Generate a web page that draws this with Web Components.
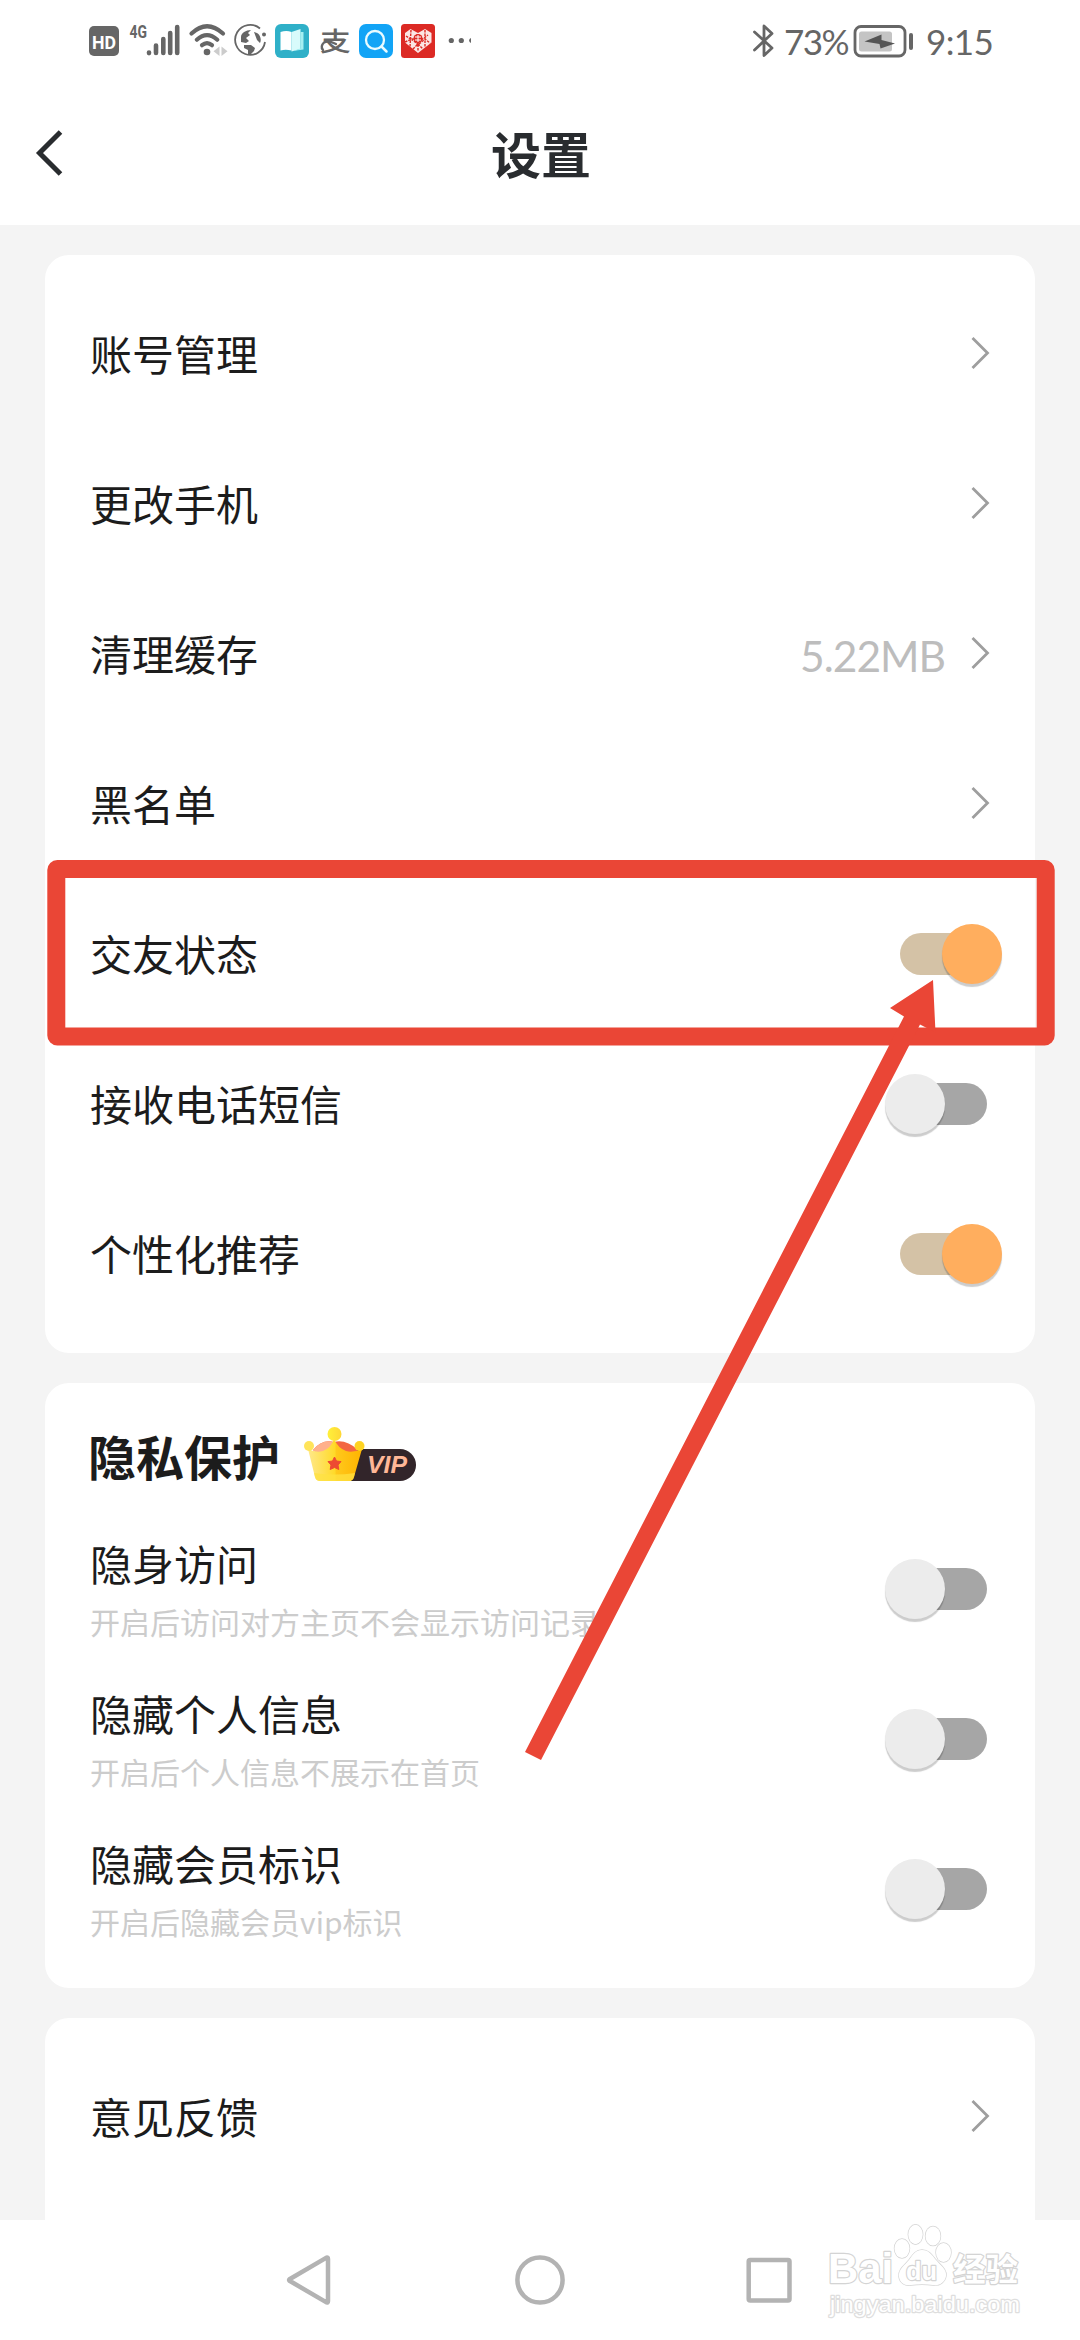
<!DOCTYPE html>
<html lang="zh-CN">
<head>
<meta charset="utf-8">
<title>设置</title>
<style>
html,body{margin:0;padding:0}
body{width:1080px;height:2340px;overflow:hidden;background:#f4f4f4;font-family:"Noto Sans CJK SC",sans-serif;color:#1c1c1c}
</style>
</head>
<body>
<settings-app></settings-app>
<script>
const define=(name,html)=>customElements.define(name,class extends HTMLElement{
  constructor(){
    super();
    const t=document.createElement('template');
    t.innerHTML=html;
    this.attachShadow({mode:'open'}).append(t.content.cloneNode(true));
  }
});

define('status-bar',`
<style>
:host{display:flex;height:80px;box-sizing:border-box;justify-content:space-between;background:#fff;color:#666;padding:0 90px 0 88px}
.r{display:flex;align-items:center;height:82px;font:35px/40px Lato,"Noto Sans",sans-serif}
svg{display:block;flex:none}
.p{margin-left:9px;width:64px;white-space:nowrap;letter-spacing:-1.6px}
.b{margin-left:5px}
.t{margin-left:11px;width:64px;white-space:nowrap;letter-spacing:-.6px}
</style>
<svg width="390" height="80" viewBox="88 0 390 80" fill="none">
  <rect x="89" y="26" width="30" height="30" rx="5" fill="#666"/>
  <text x="92" y="48.500" textLength="24" lengthAdjust="spacingAndGlyphs" font-family="Roboto,sans-serif" font-weight="700" font-size="19" fill="#fff">HD</text>
  <text x="129.500" y="38" textLength="17.500" lengthAdjust="spacingAndGlyphs" font-family="Roboto,sans-serif" font-weight="700" font-size="19" fill="#666">4G</text>
  <g stroke="#666" stroke-width="4.600" stroke-linecap="round"><path d="M149 52.500v.6M156 45.500v7.500M163.300 39v14M170.200 33v20M177.200 27v26"/></g>
  <g stroke="#666" stroke-width="4.200" stroke-linecap="round"><path d="M191.500 33.500Q207 19 223 33.500M196.800 39.700Q207 30.500 217.300 39.700M202 45.200Q207 41 212 45.200"/></g>
  <circle cx="207" cy="52" r="3.300" fill="#666"/>
  <path d="M219.500 46.500v9.500l-6-4.700zM221.500 46.500v9.500l6-4.700z" fill="#ccc"/>
  <g stroke="#666" stroke-width="1.800"><path d="M260 28.500A15 15 0 1 0 265 42"/></g>
  <circle cx="264" cy="34.500" r="2" fill="#666"/>
  <path d="M241 37c0-4 5-7 10-7l-3 3 2 2-4 3 3 3-3 2-5-1zM244 45l7 0 4 3-1 3-4 4-2-1 0-4-4-2zM254 32c6 1 8 7 6 11l-3-3z" fill="#666"/>
  <rect x="275" y="24" width="34" height="34" rx="6" fill="#2fb0c8"/>
  <path d="M280.500 32q6-2 11 0v18.500q-6-1.500-11 0z" fill="#fff"/><path d="M291.500 32l9-3v20l-9 2.500z" fill="#d8fbfb"/><path d="M300.500 32h3v17.500l-11 1.500 8-2.500z" fill="#a5eff1"/>
  <text transform="translate(320 51) scale(1.100 .94)" x="0" y="0" font-family="Noto Sans CJK SC,sans-serif" font-weight="500" font-size="28" fill="#666">支</text>
  <path d="M336 44q-8-4-12-1.500-4 4-1 7.500" stroke="#666" stroke-width="2.400" stroke-linecap="round"/>
  <rect x="359" y="24" width="34" height="34" rx="7" fill="#12a4f6"/>
  <circle cx="375" cy="40" r="9" stroke="#e9fbff" stroke-width="2.300"/><path d="M381.500 46.500l5 5" stroke="#e9fbff" stroke-width="2.500" stroke-linecap="round"/>
  <rect x="401" y="24" width="34" height="34" rx="3.500" fill="#dc2a24"/>
  <path d="M418 53L405 42.500V33l5.500-4 7.500 4 7-4 6.500 4v9.500z" fill="#fff" opacity=".88"/>
  <path d="M406 36l6 4 5-5 4 5 7-5M405 42l7-3 6 6 7-6 5 4M411 30l-1 17M425 30l0 17M418 34v17M413 49l5-5 5 5" stroke="#dc2a24" stroke-width="1.400" stroke-dasharray="2.500 1"/>
  <circle cx="418" cy="38.500" r="4.500" fill="#dc2a24"/><path d="M415 37h6M415 40h6M418 35v7" stroke="#fff" stroke-width="1"/>
  <g fill="#666"><circle cx="451.300" cy="40.500" r="2.600"/><circle cx="461.300" cy="40.500" r="2.600"/><path d="M471 38a2.600 2.600 0 0 0 0 5z"/></g>
</svg>
<div class="r">
  <svg width="22" height="34" viewBox="753 23 22 34" fill="none" stroke="#666" stroke-width="2.800" stroke-linejoin="round" stroke-linecap="round"><path d="M754.500 31L772 47l-8 7.500V25l8 7.500-17.500 16.500"/></svg>
  <span class="p">73%</span>
  <svg class="b" width="62" height="34" viewBox="853 23 62 34"><rect x="855" y="25.500" width="50" height="29.500" rx="6" fill="none" stroke="#666" stroke-width="2.800"/><rect x="859" y="30.500" width="33" height="20" rx="2.500" fill="#c4c4c4"/><path d="M864.500 40.500L881.500 33.500v5.500l13.500 3.500-14.500 5-1-4.500z" fill="#555"/><rect x="909" y="32" width="4" height="17" rx="2" fill="#666"/></svg>
  <span class="t">9:15</span>
</div>`);

define('nav-header',`
<style>
:host{display:flex;height:145px;box-sizing:border-box;background:#fff;align-items:center;padding:0 35px;color:#292c2f}
h1{flex:1;margin:0 34px 0 0;text-align:center;font-size:50px;line-height:60px;font-weight:700;padding:0 0 2px 1px}
svg{display:block;width:35px}
</style>
<svg width="35" height="50" viewBox="35 128 35 50" fill="none" stroke="#292c2f" stroke-width="5"><path d="M60.500 132L39.500 153l21 21"/></svg>
<h1><slot></slot></h1>`);

define('settings-card',`
<style>:host{display:block;flex:none;background:#fff;border-radius:24px;padding:24px 45px}</style><slot></slot>`);

define('chevron-icon',`
<style>:host{display:block}svg{display:block}</style>
<svg width="20" height="34" viewBox="0 0 20 34" fill="none" stroke="#9e9e9e" stroke-width="2.800"><path d="M2.500 1l15 15-15 15"/></svg>`);

define('toggle-switch',`
<style>
:host{display:flex;align-items:center;width:87px;height:42px;border-radius:21px;background:#a6a6a6;margin-right:3px}
i{display:block;flex:none;width:60px;height:60px;border-radius:50%;background:#ececec;margin-left:-15px;box-shadow:0 3px 1px rgba(0,0,0,.2)}
:host([on]){background:#d4c2a6}
:host([on]) i{background:#ffae5e;margin-left:42px}
</style><i></i>`);

define('setting-row',`
<style>
:host{display:flex;height:150px;align-items:center;justify-content:space-between}
.l{display:flex;flex-direction:column;font-size:42px;line-height:60px;padding-bottom:2px}
.r{display:flex;align-items:center;gap:25px}
::slotted([slot=note]){font-size:30px;line-height:44px;margin-top:6px;color:#ccc}
::slotted([slot=value]){font:42.500px/50px Lato,"Noto Sans",sans-serif;letter-spacing:-1px;padding-top:3px;color:#bdbdbd}
</style>
<div class="l"><span><slot></slot></span><slot name="note"></slot></div>
<div class="r"><slot name="value"></slot><slot name="control"><chevron-icon></chevron-icon></slot></div>`);

define('vip-heading',`
<style>
:host{display:flex;height:107px;box-sizing:border-box;align-items:center;gap:23px;padding-bottom:11px}
h2{margin:0 0 0 -2px;font-size:48px;line-height:60px;font-weight:700}
svg{display:block}
</style>
<h2><slot></slot></h2>
<svg width="114" height="56" viewBox="302 1427 114 56">
  <defs><linearGradient id="g"><stop offset="0" stop-color="#ffe88b"/><stop offset=".5" stop-color="#ffda28"/><stop offset=".52" stop-color="#ffc91c"/><stop offset="1" stop-color="#ffb300"/></linearGradient><linearGradient id="y"><stop offset="0" stop-color="#fff03a"/><stop offset="1" stop-color="#ffd735"/></linearGradient></defs>
  <path d="M352 1449h47a16 16 0 0 1 0 32h-49z" fill="#32252a"/>
  <path d="M312 1450q9-11 21-8 12-3 24 8l-12 10h-22z" fill="#f36642"/><path d="M312 1450q9-11 21-8v17h-10z" fill="#ffb08b"/>
  <path d="M307 1449q8 4 15 2 8-3 11-12 4 9 12 12 7 2 16-2l-8 28q-1 4-5 4h-29q-4 0-5-4z" fill="url(#g)"/>
  <path d="M313 1473q20 3 41 0l-1 4q-1 4-5 4h-29q-4 0-5-4z" fill="#ffe142" opacity=".75"/>
  <circle cx="333.500" cy="1434" r="7" fill="url(#y)"/><circle cx="308" cy="1446" r="5" fill="#ffe45a"/><circle cx="358.500" cy="1446" r="5" fill="#ffd321"/>
  <path d="M333.500 1457l2 4 4.500.6-3 3.400.8 4.500-4.300-2-4.300 2 .8-4.500-3-3.400 4.500-.6z" fill="#ed4a32" stroke="#ed4a32"/>
  <text x="366" y="1473" textLength="40" lengthAdjust="spacingAndGlyphs" font-family="Liberation Sans,sans-serif" font-size="24" font-weight="700" font-style="italic" fill="#ffb797">VIP</text>
</svg>`);

define('system-nav',`
<style>
:host{display:flex;height:120px;flex:none;background:#fff;align-items:center;position:relative}
svg{display:block}
</style>
<svg width="1080" height="120" viewBox="0 2220 1080 120" fill="none">
  <g stroke="#b3b3b3" stroke-width="4.500" stroke-linejoin="round"><path d="M289.500 2279.200L326.500 2257.600Q328 2257.200 328 2259V2301Q328 2302.800 326.500 2302.400L289.500 2280.800Q288.600 2280 289.500 2279.200Z"/><circle cx="540" cy="2280" r="22.600"/><rect x="748.700" y="2260" width="40.800" height="40.500" rx="1.500"/></g>
</svg>`);

define('water-mark',`
<style>:host{display:block;position:absolute;left:810px;top:2210px}svg{display:block}</style>
<svg width="230" height="120" viewBox="810 2210 230 120" fill="#fff" stroke="#d4d4d4" stroke-width="2.400" paint-order="stroke" stroke-linejoin="round">
  <text x="828" y="2283" textLength="65" lengthAdjust="spacingAndGlyphs" font-family="Liberation Sans,sans-serif" font-weight="700" font-size="42">Bai</text>
  <g stroke-width="1.400"><ellipse cx="902" cy="2248.500" rx="7.500" ry="9.500"/><ellipse cx="915.500" cy="2234.500" rx="7.200" ry="9.700"/><ellipse cx="933" cy="2236" rx="7.500" ry="9.500"/><ellipse cx="943.500" cy="2252.500" rx="7.500" ry="9.500"/>
  <path d="M922 2250c-7 0-10 6-13 10-4 5-11 9-10 17 1 6 6 9 12 8 7-1 15-1 22 0 7 1 12-3 13-9 1-7-6-11-10-16-4-5-7-10-14-10z"/></g>
  <text x="906" y="2280" textLength="31" lengthAdjust="spacingAndGlyphs" font-family="Liberation Sans,sans-serif" font-weight="700" font-size="26">du</text>
  <text x="953" y="2281" textLength="65" lengthAdjust="spacingAndGlyphs" font-family="Noto Sans CJK SC,sans-serif" font-weight="700" font-size="32">经验</text>
  <text x="830" y="2312" textLength="190" lengthAdjust="spacingAndGlyphs" font-family="Liberation Sans,sans-serif" font-size="21.500" stroke="#dedede">jingyan.baidu.com</text>
</svg>`);

define('callout-marks',`
<style>:host{display:block;position:absolute;left:0;top:0;pointer-events:none}svg{display:block}</style>
<svg width="1080" height="1800" viewBox="0 0 1080 1800"><rect x="56.300" y="869" width="989.400" height="167.500" rx="1" fill="none" stroke="#ea4636" stroke-width="18" stroke-linejoin="round"/><path d="M933 980L890 1008l14 8.500L525 1752l16 8L920 1024.500l15.500 8z" fill="#ea4636"/></svg>`);

define('settings-app',`
<style>
:host{display:flex;flex-direction:column;width:1080px;height:2340px;position:relative;background:#f4f4f4;overflow:hidden}
main{flex:1;min-height:0;overflow:hidden;display:flex;flex-direction:column;gap:30px;padding:30px 45px 0;box-sizing:border-box}
</style>
<status-bar></status-bar>
<nav-header>设置</nav-header>
<main>
  <settings-card>
    <setting-row>账号管理</setting-row>
    <setting-row>更改手机</setting-row>
    <setting-row>清理缓存<span slot="value">5.22MB</span></setting-row>
    <setting-row>黑名单</setting-row>
    <setting-row>交友状态<toggle-switch slot="control" on></toggle-switch></setting-row>
    <setting-row>接收电话短信<toggle-switch slot="control"></toggle-switch></setting-row>
    <setting-row>个性化推荐<toggle-switch slot="control" on></toggle-switch></setting-row>
  </settings-card>
  <settings-card>
    <vip-heading>隐私保护</vip-heading>
    <setting-row>隐身访问<span slot="note">开启后访问对方主页不会显示访问记录</span><toggle-switch slot="control"></toggle-switch></setting-row>
    <setting-row>隐藏个人信息<span slot="note">开启后个人信息不展示在首页</span><toggle-switch slot="control"></toggle-switch></setting-row>
    <setting-row>隐藏会员标识<span slot="note">开启后隐藏会员vip标识</span><toggle-switch slot="control"></toggle-switch></setting-row>
  </settings-card>
  <settings-card>
    <setting-row>意见反馈</setting-row>
    <setting-row></setting-row>
  </settings-card>
</main>
<system-nav></system-nav>
<water-mark></water-mark>
<callout-marks></callout-marks>`);
</script>
</body>
</html>
